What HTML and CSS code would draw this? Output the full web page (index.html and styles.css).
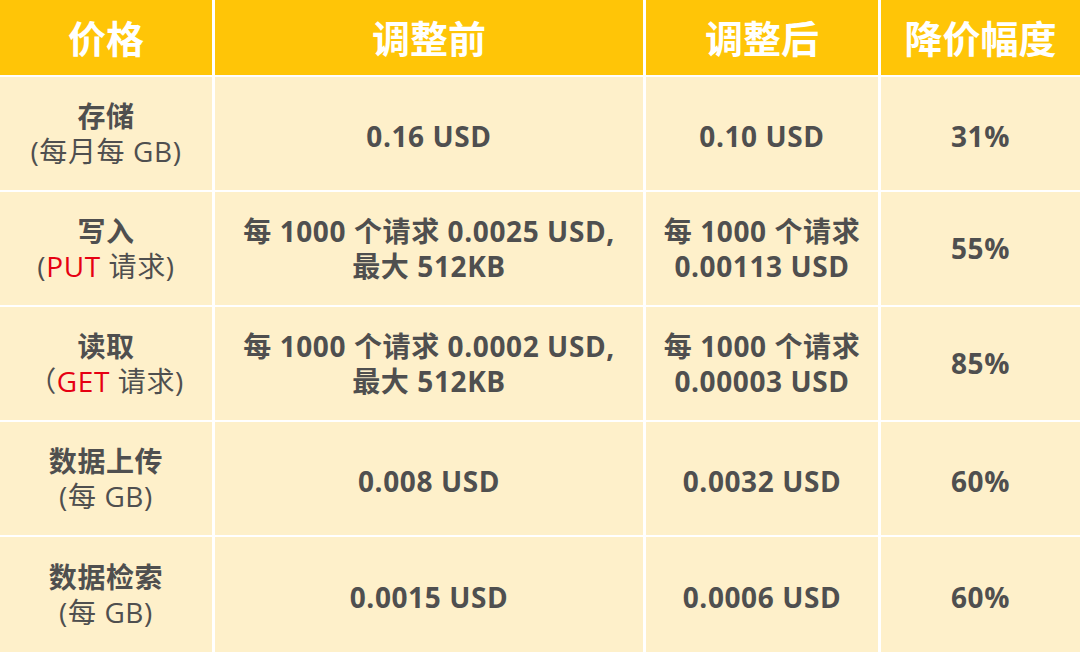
FILE: index.html
```html
<!DOCTYPE html>
<html lang="zh-CN">
<head>
<meta charset="utf-8">
<link rel="stylesheet" href="styles.css">
</head>
<body>
<div class="table">
  <div class="cell head">价格</div>
  <div class="cell head">调整前</div>
  <div class="cell head">调整后</div>
  <div class="cell head">降价幅度</div>

  <div class="cell name"><b>存储</b><span>(每月每 GB)</span></div>
  <div class="cell single">0.16 USD</div>
  <div class="cell single">0.10 USD</div>
  <div class="cell single">31%</div>

  <div class="cell name"><b>写入</b><span>(<em>PUT</em> 请求)</span></div>
  <div class="cell">每 1000 个请求 0.0025 USD,<br>最大 512KB</div>
  <div class="cell">每 1000 个请求<br>0.00113 USD</div>
  <div class="cell">55%</div>

  <div class="cell name"><b>读取</b><span>（<em>GET</em> 请求)</span></div>
  <div class="cell">每 1000 个请求 0.0002 USD,<br>最大 512KB</div>
  <div class="cell">每 1000 个请求<br>0.00003 USD</div>
  <div class="cell">85%</div>

  <div class="cell name"><b>数据上传</b><span>(每 GB)</span></div>
  <div class="cell single">0.008 USD</div>
  <div class="cell single">0.0032 USD</div>
  <div class="cell single">60%</div>

  <div class="cell name"><b>数据检索</b><span>(每 GB)</span></div>
  <div class="cell single">0.0015 USD</div>
  <div class="cell single">0.0006 USD</div>
  <div class="cell single">60%</div>
</div>
</body>
</html>
```
FILE: styles.css
```css
html, body {
  margin: 0;
  padding: 0;
  background: #ffffff;
}
.table {
  width: 1080px;
  height: 652px;
  display: grid;
  grid-template-columns: 212px 428px 232px 199px;
  grid-template-rows: 75px 113px 113px 113px 113px 115px;
  column-gap: 3px;
  row-gap: 2px;
  background: #ffffff;
  font-family: "Open Sans", "Noto Sans CJK SC", sans-serif;
}
.cell {
  background: #fef0ca;
  color: #4f4f4f;
  font-size: 28px;
  font-weight: 700;
  line-height: 35px;
  letter-spacing: 0.6px;
  display: flex;
  flex-direction: column;
  align-items: center;
  justify-content: center;
  text-align: center;
}
.single {
  padding-top: 6px;
}
.head {
  background: #ffc507;
  color: #ffffff;
  font-size: 38px;
  line-height: 40px;
  letter-spacing: 0;
}
.name b {
  font-weight: 700;
}
.name span {
  font-weight: 400;
}
.name em {
  font-style: normal;
  color: #e60012;
}
```
